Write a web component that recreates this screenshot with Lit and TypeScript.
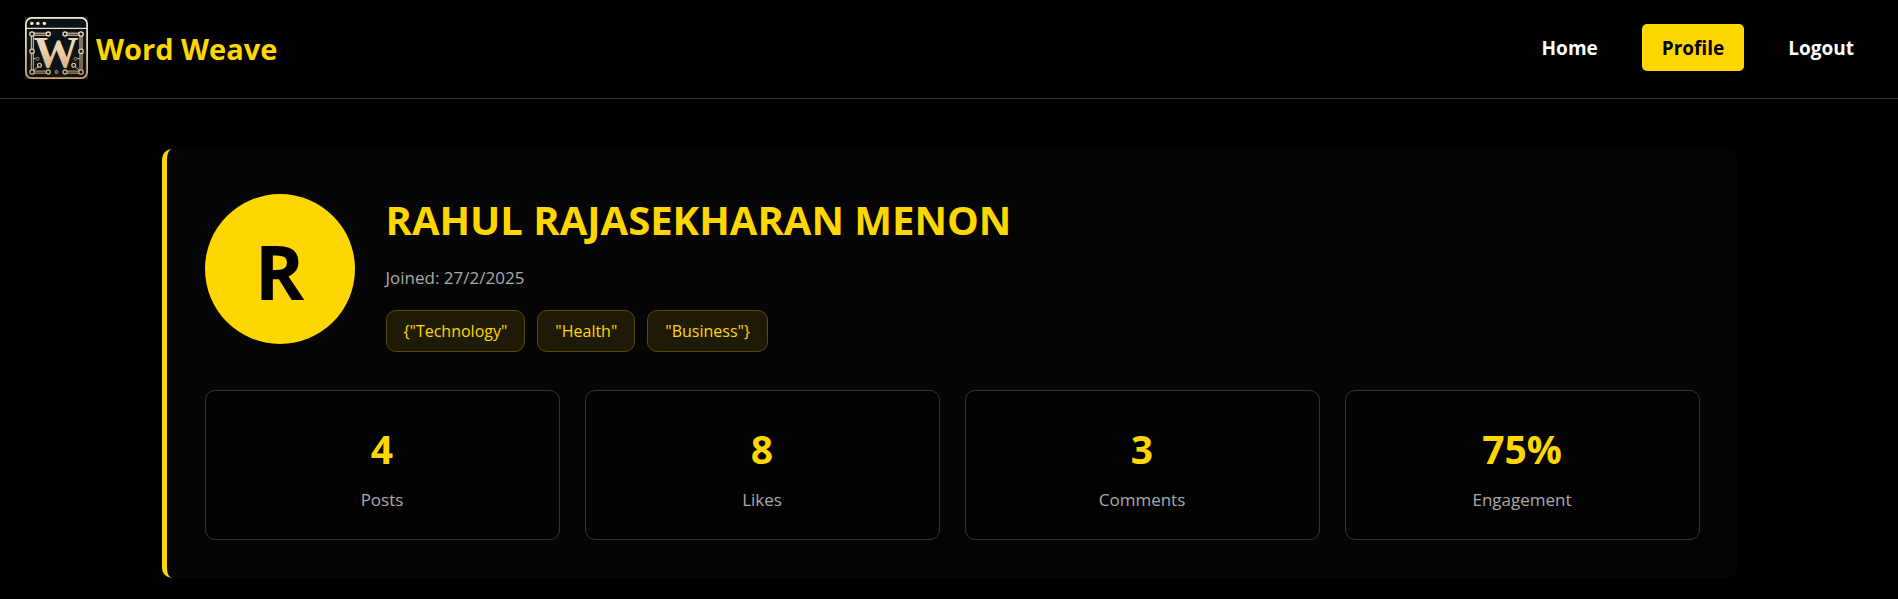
import { LitElement, html, svg, css } from "lit";
import { customElement, property, state } from "lit/decorators.js";
import { classMap } from "lit/directives/class-map.js";

type Stat = { value: string; label: string };

@customElement("brand-logo")
export class BrandLogo extends LitElement {
  static styles = css`
    :host {
      display: block;
      flex: none;
    }
    .mark {
      display: block;
      width: 63px;
      height: 62px;
    }
    .letter {
      font: 700 45px "Liberation Serif", serif;
    }
  `;

  // Hollow joints at the ends and bends of the circuit traces.
  private joints: [number, number, number][] = [
    [7, 17, 2.2], [23.3, 17, 2], [40, 17, 2], [56, 17, 2.2],
    [7, 34.3, 2.2], [56, 34.3, 2.2],
    [7, 55, 2.2], [23.3, 55, 2], [40, 55, 2], [56, 55, 2.2],
    [14.5, 48.3, 1.9], [48.7, 48.3, 1.9],
  ];

  render() {
    return html`
      <svg class="mark" viewBox="0 0 63 62" role="img" aria-label="Word Weave logo">
        <defs>
          <linearGradient id="gold" x1="0" y1="0" x2="0" y2="62" gradientUnits="userSpaceOnUse">
            <stop offset="0" stop-color="#f8ead2" />
            <stop offset="0.5" stop-color="#eed2ac" />
            <stop offset="1" stop-color="#cfa06a" />
          </linearGradient>
        </defs>
        <rect width="63" height="62" fill="#1c2226" />
        <rect x="0.9" y="0.9" width="61.2" height="60.2" rx="6" fill="#0a1317" stroke="url(#gold)" stroke-width="1.7" />
        <path d="M1 11.4H62" stroke="#eadcc4" stroke-width="1.3" />
        <g fill="#f6ead6">
          <circle cx="6.8" cy="6.4" r="1.7" />
          <circle cx="12.9" cy="6.4" r="1.7" />
          <circle cx="19.4" cy="6.4" r="1.7" />
        </g>
        <g fill="none" stroke="url(#gold)" stroke-width="1">
          <path d="M9 16.2H21.4M9 18.2H21.4M42 16.2H54M42 18.2H54" />
          <path d="M9 54.1H21.4M9 56.1H21.4M42 54.1H54M42 56.1H54" />
          <path d="M6.3 19V32M8.3 19V32M6.3 36.4V53M8.3 36.4V53" />
          <path d="M55 19V32M57 19V32M55 36.4V53M57 36.4V53" />
          <path d="M8.5 41.6H11M8.5 53.5L13.2 49.6M54.5 41.6H52M54.5 53.5L50 49.6" />
        </g>
        <g fill="#0a1317" stroke="url(#gold)" stroke-width="1.3">
          ${this.joints.map(([x, y, r]) => svg`<circle cx=${x} cy=${y} r=${r} />`)}
        </g>
        <g fill="none" stroke="#94744f" stroke-width="1.1">
          <circle cx="12.6" cy="41.8" r="1.5" />
          <circle cx="50.6" cy="41.8" r="1.5" />
          <circle cx="31.5" cy="55" r="1.5" fill="#5c4a36" />
        </g>
        <text class="letter" x="31" y="50" text-anchor="middle" fill="url(#gold)">W</text>
      </svg>
    `;
  }
}

@customElement("site-header")
export class SiteHeader extends LitElement {
  @property() current = "Profile";

  static styles = css`
    :host {
      display: block;
      border-bottom: 1px solid #333;
    }
    .bar {
      display: flex;
      align-items: center;
      justify-content: space-between;
      padding: 17px 24px 19px 25px;
    }
    .brand {
      display: flex;
      align-items: center;
      gap: 8px;
      color: #ffd700;
      font-size: 29px;
      font-weight: 700;
      line-height: 40px;
      text-decoration: none;
    }
    .title {
      padding-top: 2px;
    }
    .links {
      display: flex;
      gap: 24px;
      padding-bottom: 1px;
    }
    .link {
      padding: 11px 20px 9px;
      border-radius: 5px;
      color: #fff;
      font-size: 19px;
      font-weight: 700;
      line-height: 27px;
      text-decoration: none;
    }
    .active {
      background: #ffd700;
      color: #000;
    }
  `;

  render() {
    return html`
      <header class="bar">
        <a class="brand" href="#home"><brand-logo></brand-logo><span class="title">Word Weave</span></a>
        <nav class="links">
          ${["Home", "Profile", "Logout"].map(
            (name) => html`<a
              class=${classMap({ link: true, active: name === this.current })}
              href="#${name.toLowerCase()}"
              >${name}</a
            >`
          )}
        </nav>
      </header>
    `;
  }
}

@customElement("profile-card")
export class ProfileCard extends LitElement {
  @property() name = "";
  @property() joined = "";
  @property({ attribute: false }) interests: string[] = [];
  @property({ attribute: false }) stats: Stat[] = [];

  static styles = css`
    :host {
      display: block;
    }
    .card {
      padding: 38px 37px 38px 38px;
      border-left: 5px solid #ffd700;
      border-radius: 10px;
      background: #050505;
    }
    .intro {
      display: flex;
      align-items: flex-start;
      gap: 31px;
      margin-bottom: 38px;
    }
    .avatar {
      display: grid;
      place-items: center;
      flex: none;
      box-sizing: border-box;
      width: 150px;
      height: 150px;
      margin-top: 7px;
      padding-top: 4px;
      border-radius: 50%;
      background: #ffd700;
      color: #000;
      font-size: 75px;
      font-weight: 700;
      line-height: 100px;
    }
    .name {
      margin: 0 0 14px;
      color: #ffd700;
      font-size: 40px;
      font-weight: 700;
      line-height: 66px;
    }
    .joined {
      margin: 0 0 22px;
      color: #aaa;
      font-size: 17px;
      line-height: 21px;
    }
    .tags {
      display: flex;
      flex-wrap: wrap;
      gap: 12px;
      margin: 0;
      padding: 0;
      list-style: none;
    }
    .tag {
      padding: 9px 17px 8px;
      border: 1px solid #5a4d08;
      border-radius: 10px;
      background: #1e1a05;
      color: #ffd700;
      font-size: 16px;
      line-height: 23px;
    }
    .stats {
      display: grid;
      grid-template-columns: repeat(auto-fit, minmax(200px, 1fr));
      gap: 25px;
      margin: 0;
    }
    .stat {
      display: flex;
      flex-direction: column-reverse;
      gap: 10px;
      padding: 30px 24px 26px;
      border: 1px solid #333;
      border-radius: 10px;
      background: #020202;
      text-align: center;
    }
    .value {
      margin: 0;
      color: #ffd700;
      font-size: 39px;
      font-weight: 700;
      line-height: 56px;
    }
    .label {
      color: #aaa;
      font-size: 17px;
      line-height: 26px;
    }
  `;

  render() {
    return html`
      <section class="card">
        <div class="intro">
          <div class="avatar" aria-hidden="true">${this.name.charAt(0)}</div>
          <div>
            <h1 class="name">${this.name}</h1>
            <p class="joined">Joined: ${this.joined}</p>
            <ul class="tags">
              ${this.interests.map((tag) => html`<li class="tag">${tag}</li>`)}
            </ul>
          </div>
        </div>
        <dl class="stats">
          ${this.stats.map(
            (s) => html`
              <div class="stat">
                <dt class="label">${s.label}</dt>
                <dd class="value">${s.value}</dd>
              </div>
            `
          )}
        </dl>
      </section>
    `;
  }
}

@customElement("app-root")
export class AppRoot extends LitElement {
  @state() private interests = ['{"Technology"', '"Health"', '"Business"}'];
  @state() private stats: Stat[] = [
    { value: "4", label: "Posts" },
    { value: "8", label: "Likes" },
    { value: "3", label: "Comments" },
    { value: "75%", label: "Engagement" },
  ];

  static styles = css`
    :host {
      display: block;
      min-height: 100vh;
      background: #000;
      font-family: "Segoe UI", "Open Sans", "Noto Sans", sans-serif;
    }
    .content {
      width: 83%;
      max-width: 1575px;
      margin: 0 auto;
      padding: 50px 0 20px;
    }
  `;

  render() {
    return html`
      <site-header current="Profile"></site-header>
      <main class="content">
        <profile-card
          name="RAHUL RAJASEKHARAN MENON"
          joined="27/2/2025"
          .interests=${this.interests}
          .stats=${this.stats}
        ></profile-card>
      </main>
    `;
  }
}
